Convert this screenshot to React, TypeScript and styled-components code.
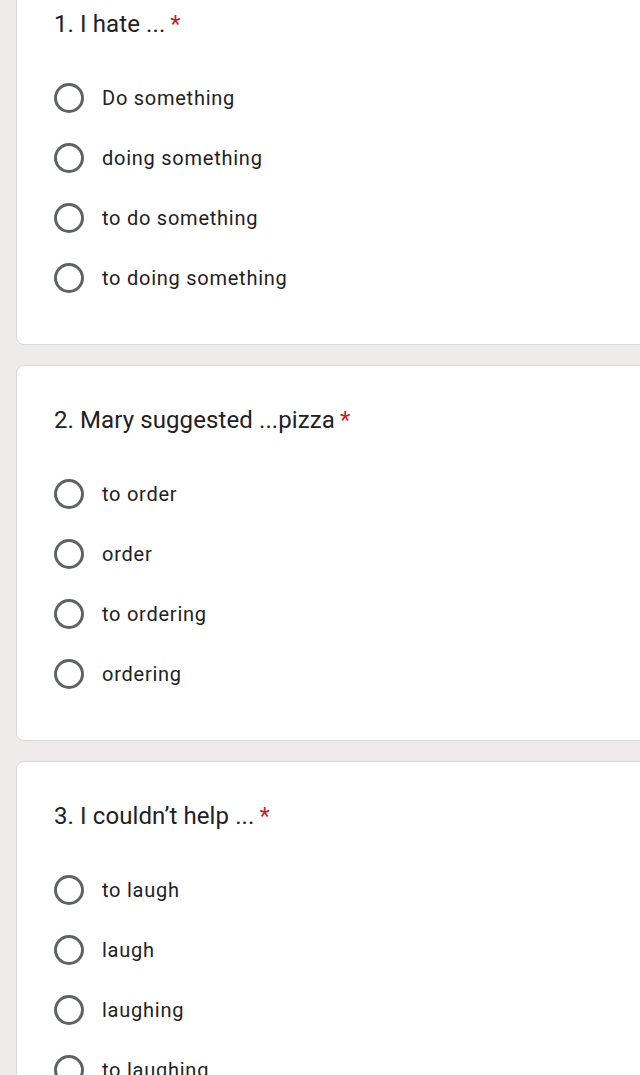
import React from "react";
import styled, { createGlobalStyle } from "styled-components";

const Global = createGlobalStyle`
  html, body { margin: 0; padding: 0; }
  body {
    background: #eeebea;
    font-family: Roboto, "Noto Sans", Arial, sans-serif;
    overflow: hidden;
    width: 640px;
    height: 1075px;
  }
`;

const Page = styled.div`
  display: flex;
  flex-direction: column;
  gap: 20px;
  padding-left: 16px;
  margin-top: -31px;
`;

const Card = styled.section`
  background: #ffffff;
  border: 1px solid #d9d9d9;
  border-radius: 8px;
  width: 660px;
  box-sizing: border-box;
  height: 376px;
  padding: 38px 0 0 37px;
  display: flex;
  flex-direction: column;
`;

const Title = styled.div`
  font-size: 24px;
  line-height: 32px;
  color: #202124;
  letter-spacing: 0.1px;
`;

const Star = styled.span`
  color: #c5221f;
  margin-left: 5px;
`;

const Options = styled.div`
  display: flex;
  flex-direction: column;
  margin-top: 28px;
`;

const Option = styled.label`
  display: flex;
  align-items: center;
  height: 60px;
  gap: 18px;
`;

const Radio = styled.span`
  width: 30px;
  height: 30px;
  box-sizing: border-box;
  border: 3px solid #5f6368;
  border-radius: 50%;
  flex: none;
`;

const OptionText = styled.span`
  font-size: 20px;
  color: #202124;
  letter-spacing: 0.75px;
`;

const questions = [
  { title: "1. I hate ...", options: ["Do something", "doing something", "to do something", "to doing something"] },
  { title: "2. Mary suggested ...pizza", options: ["to order", "order", "to ordering", "ordering"] },
  { title: "3. I couldn\u2019t help ...", options: ["to laugh", "laugh", "laughing", "to laughing"] },
];

export default function App() {
  return (
    <>
      <Global />
      <Page>
        {questions.map((q) => (
          <Card key={q.title}>
            <Title>
              {q.title}
              <Star>*</Star>
            </Title>
            <Options>
              {q.options.map((o) => (
                <Option key={o}>
                  <Radio />
                  <OptionText>{o}</OptionText>
                </Option>
              ))}
            </Options>
          </Card>
        ))}
      </Page>
    </>
  );
}
